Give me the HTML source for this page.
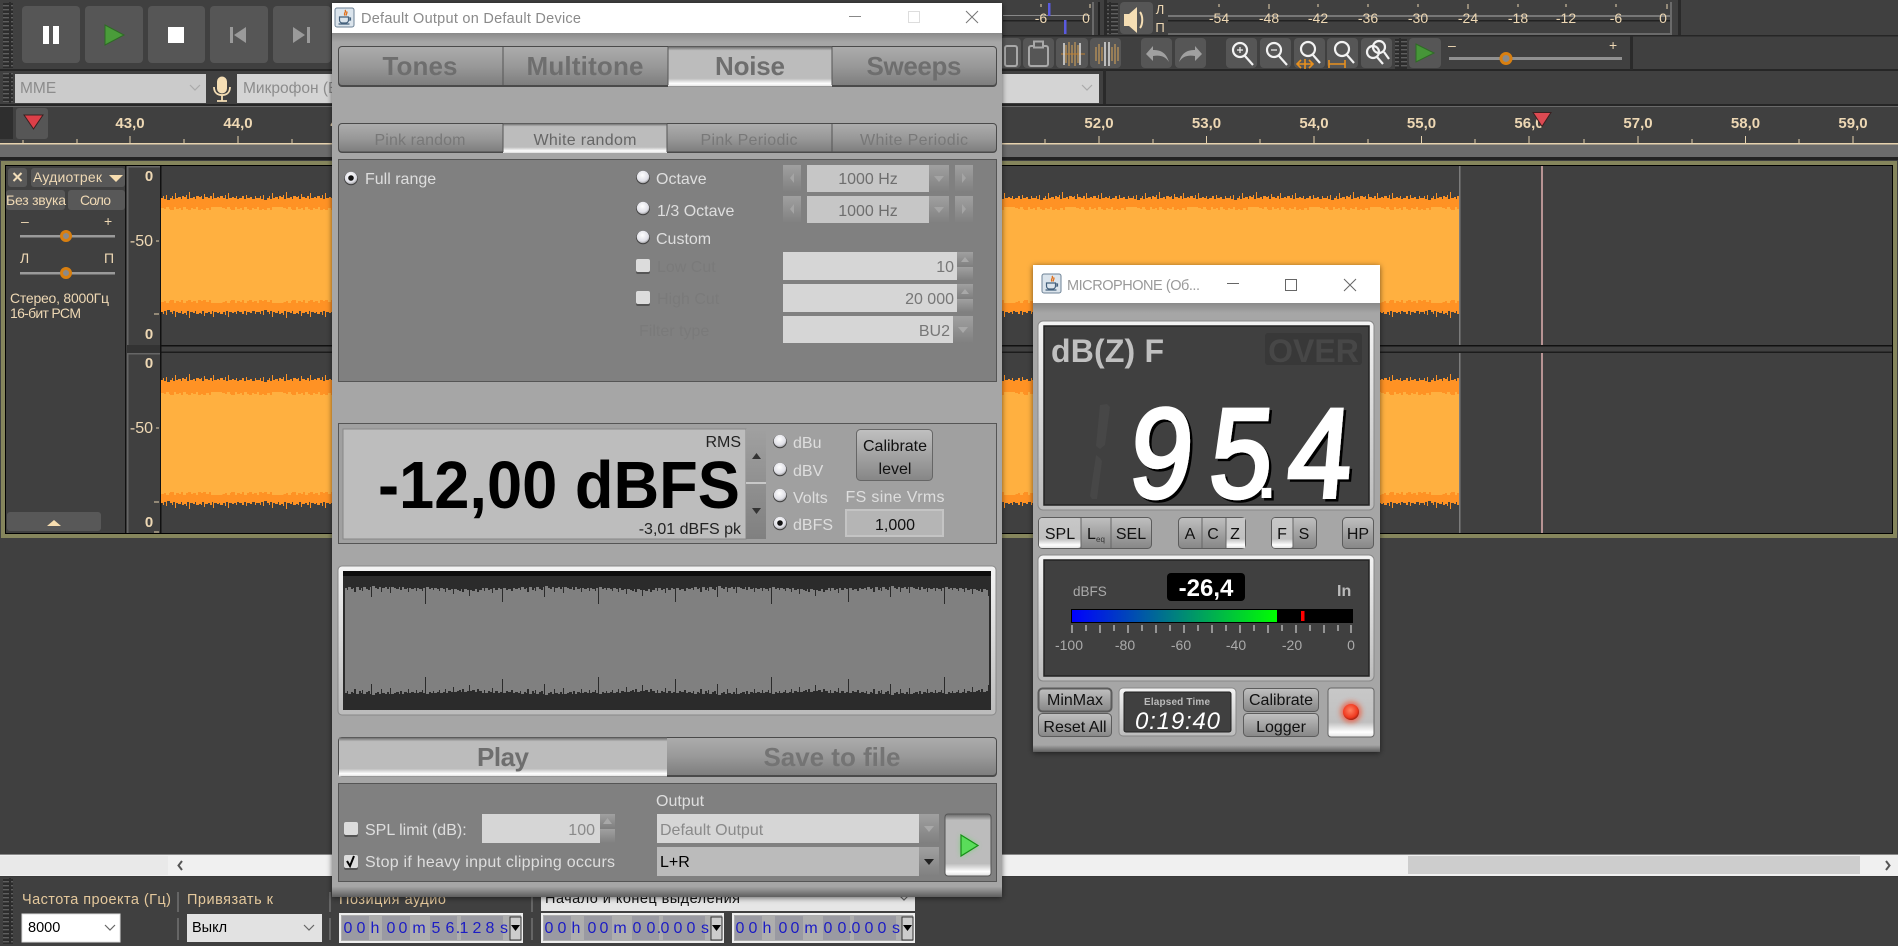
<!DOCTYPE html>
<html lang="ru"><head><meta charset="utf-8"><title>Audacity + REW generator</title>
<style>
html,body{margin:0;padding:0;background:#404040;width:1898px;height:946px;overflow:hidden}
svg{display:block}
text{font-family:"Liberation Sans","Noto Sans CJK SC",sans-serif;white-space:pre}
.b{font-weight:bold}.c{text-anchor:middle}.r{text-anchor:end}
.cr{fill:#eed8b4}.lt{fill:#dedede;font-size:16px}.dim{fill:#787878;font-size:16px}
.tab{font-weight:bold;font-size:26px;fill:#6e6e6e;text-anchor:middle}
.st{fill:#e4c89c;font-size:14.5px}
.rl{fill:#eed8b4;font-weight:bold;font-size:15px;text-anchor:middle}
.ml{fill:#eed8b4;font-size:14px;text-anchor:middle}
.bk{fill:#111;font-size:16px;text-anchor:middle}
.tm{fill:#1c1cc4;font-size:16px;text-anchor:middle}
</style></head><body>
<svg width="1898" height="946" viewBox="0 0 1898 946" xmlns="http://www.w3.org/2000/svg">
<defs>
<linearGradient id="tb" x1="0" y1="0" x2="0" y2="1"><stop offset="0" stop-color="#acacac"/><stop offset=".5" stop-color="#999"/><stop offset="1" stop-color="#7e7e7e"/></linearGradient>
<linearGradient id="ts" x1="0" y1="0" x2="0" y2="1"><stop offset="0" stop-color="#666"/><stop offset=".1" stop-color="#bcbcbc"/><stop offset=".8" stop-color="#bcbcbc"/><stop offset=".93" stop-color="#fff"/><stop offset="1" stop-color="#ddd"/></linearGradient>
<linearGradient id="sb" x1="0" y1="0" x2="0" y2="1"><stop offset="0" stop-color="#c0c0c0"/><stop offset="1" stop-color="#868686"/></linearGradient>
<linearGradient id="ss" x1="0" y1="0" x2="0" y2="1"><stop offset="0" stop-color="#c8c8c8"/><stop offset=".7" stop-color="#c0c0c0"/><stop offset=".9" stop-color="#fff"/><stop offset="1" stop-color="#e4e4e4"/></linearGradient>
<linearGradient id="bz" x1="0" y1="0" x2="0" y2="1"><stop offset="0" stop-color="#f4f4f4"/><stop offset="1" stop-color="#bbb"/></linearGradient>
<linearGradient id="sp" x1="0" y1="0" x2="0" y2="1"><stop offset="0" stop-color="#a0a0a0"/><stop offset="1" stop-color="#808080"/></linearGradient>
<linearGradient id="wb" x1="0" y1="0" x2="0" y2="1"><stop offset="0" stop-color="#a6a6a6"/><stop offset=".3" stop-color="#a6a6a6"/><stop offset="1" stop-color="#5e5e5e"/></linearGradient>
<linearGradient id="wt" x1="0" y1="0" x2="0" y2="1"><stop offset="0" stop-color="#8a8a8a"/><stop offset="1" stop-color="#a6a6a6"/></linearGradient>
<linearGradient id="vu"><stop offset="0" stop-color="#0000ff"/><stop offset="1" stop-color="#00ff00"/></linearGradient>
<radialGradient id="rad" cx=".45" cy=".35" r=".7"><stop offset="0" stop-color="#fff"/><stop offset=".7" stop-color="#dfdfe6"/><stop offset="1" stop-color="#888"/></radialGradient>
<radialGradient id="led" cx=".45" cy=".4" r=".6"><stop offset="0" stop-color="#ff8060"/><stop offset=".75" stop-color="#f03a20"/><stop offset="1" stop-color="#a02010"/></radialGradient>
<filter id="sh" x="-5%" y="-5%" width="110%" height="110%"><feDropShadow dx="0" dy="1" stdDeviation="3" flood-color="#000" flood-opacity=".55"/></filter>
<filter id="ds" x="-20%" y="-20%" width="140%" height="140%"><feDropShadow dx="2.5" dy="2.5" stdDeviation=".3" flood-color="#000" flood-opacity="1"/></filter>
<filter id="gl" x="-80%" y="-80%" width="260%" height="260%"><feGaussianBlur stdDeviation="3"/></filter>
<pattern id="grip" width="10" height="4" patternUnits="userSpaceOnUse"><rect width="10" height="4" fill="#2c2c2c"/><rect x="1" y="1" width="8" height="1.4" fill="#5e5e5e"/></pattern>
<pattern id="od" width="97" height="20" patternUnits="userSpaceOnUse"><path fill="#ff9224" d="M0 20V8H2V6H3V9H5V5H6V10H9V8H11V6H12V9H14V3H15V8H17V7H20V9H21V6H23V7H25V5H26V9H28V2H29V8H32V7H34V9H35V6H38V7H40V6H41V9H43V4H44V7H47V8H49V6H51V9H52V3H53V8H56V7H58V8H59V6H62V8H64V5H65V9H67V3H68V8H71V7H73V8H75V6H76V9H78V8H81V6H83V9H85V5H86V8H89V7H91V9H94V6H95V8H97V20Z"/></pattern>
<pattern id="ol" width="61" height="10" patternUnits="userSpaceOnUse"><path fill="#ffb040" d="M0 10V4H3V5H5V3H8V5H9V6H13V3H15V5H18V4H20V6H22V3H25V5H27V6H30V4H32V5H35V3H37V6H40V5H42V6H45V4H48V6H50V3H61V10Z"/></pattern>
<pattern id="dw" width="173" height="26" patternUnits="userSpaceOnUse"><path fill="#2b2b2b" d="M0 0V6H2V8H3V5H6V7H8V6H9V10H11V5H14V8H16V6H17V9H18V5H21V7H23V8H25V5H26V15H27V4H30V6H32V7H34V5H36V10H37V6H40V5H42V7H44V5H45V11H46V5H49V6H51V7H54V5H55V8H57V5H59V7H62V6H63V10H64V6H66V7H69V6H71V9H72V6H74V7H77V9H78V6H80V22H81V5H84V7H86V6H88V8H89V6H92V7H94V9H95V6H98V7H100V10H101V6H103V8H106V7H108V12H109V7H112V8H114V9H116V7H117V10H119V7H122V8H124V14H125V8H127V9H130V7H132V10H134V8H137V6H139V9H140V6H143V8H145V7H147V11H148V6H150V8H153V6H155V7H157V20H158V6H161V8H163V7H166V9H168V6H170V7H173V0Z"/></pattern>
<g id="rd"><circle r="6.8" cy=".5" fill="#3c3c3c"/><circle r="6.2" fill="url(#rad)"/></g>
<g id="rs"><circle r="6.8" cy=".5" fill="#3c3c3c"/><circle r="6.2" fill="url(#rad)"/><circle r="2.8" fill="#111"/></g>
<g id="java"><rect width="19" height="19" rx="2" fill="#dbe4ec" stroke="#6d8296"/><path d="M10 2c2 2-2 3 0 5.500M11.500 3.500c1.500 1.500-1 2.500 0 4" stroke="#e0701c" fill="none" stroke-width="1.300"/><path d="M4.500 9h9v3c0 2-1.500 3-3 3h-3c-1.500 0-3-1-3-3zM13.500 10h2v2h-2M3.500 16h11" stroke="#44607c" fill="none" stroke-width="1.200"/></g>
<g id="ck"><rect width="14" height="14" y="1" rx="2" fill="#555"/><rect width="14" height="13" rx="2" fill="#dcdcdc"/></g>
</defs>

<!-- background -->
<rect width="1898" height="946" fill="#404040"/>
<!-- toolbar rules -->
<rect y="69" width="1898" height="2" fill="#262626"/>
<rect x="1003" y="35" width="895" height="1.500" fill="#262626"/>
<rect y="104" width="1898" height="2" fill="#262626"/>
<rect y="106" width="1898" height="1" fill="#6a6a6a"/>
<rect x="1104" y="0" width="3" height="35" fill="#2a2a2a"/>
<rect x="1092" y="2" width="2" height="33" fill="#6a6a6a"/>
<rect x="1098" y="2" width="2" height="33" fill="#222"/>
<rect x="1670" y="2" width="2" height="33" fill="#6a6a6a"/>
<rect x="1678" y="0" width="3" height="35" fill="#2a2a2a"/>
<rect x="1630" y="36" width="3" height="34" fill="#2a2a2a"/>
<rect x="1103" y="70" width="3" height="34" fill="#2a2a2a"/>
<!-- grips -->
<rect x="3" y="2" width="10" height="66" fill="url(#grip)"/>
<rect x="3" y="73" width="10" height="30" fill="url(#grip)"/>
<rect x="0" y="107" width="13" height="32" fill="#2e2e2e"/>
<rect x="1107" y="2" width="11" height="32" fill="url(#grip)"/>
<rect x="1395" y="38" width="12" height="31" fill="url(#grip)"/>
<rect x="3" y="878" width="10" height="66" fill="url(#grip)"/>

<!-- transport -->
<g fill="#565656">
<rect x="22" y="6" width="58" height="57" rx="4"/><rect x="85" y="6" width="58" height="57" rx="4"/><rect x="148" y="6" width="57" height="57" rx="4"/><rect x="210" y="6" width="58" height="57" rx="4"/><rect x="273" y="6" width="58" height="57" rx="4"/>
<rect x="990" y="38" width="31" height="30" rx="4"/><rect x="1023" y="38" width="31" height="30" rx="4"/><rect x="1056" y="38" width="32" height="30" rx="4"/><rect x="1090" y="38" width="31" height="30" rx="4"/>
<rect x="1141" y="38" width="31" height="30" rx="4"/><rect x="1175" y="38" width="31" height="30" rx="4"/>
<rect x="1226" y="38" width="31" height="30" rx="4"/><rect x="1260" y="38" width="31" height="30" rx="4"/><rect x="1294" y="38" width="31" height="30" rx="4"/><rect x="1327" y="38" width="31" height="30" rx="4"/><rect x="1361" y="38" width="31" height="30" rx="4"/>
<rect x="1409" y="38" width="32" height="30" rx="4"/><rect x="1120" y="2" width="33" height="32" rx="4"/>
<rect x="16" y="108" width="32" height="31" rx="3"/>
</g>
<rect x="43" y="26" width="6" height="18" fill="#fff"/><rect x="53" y="26" width="6" height="18" fill="#fff"/>
<path d="M105 25l19 10-19 10z" fill="#4a9c3a" stroke="#2f6a26"/>
<rect x="168" y="27" width="16" height="16" fill="#fff"/>
<path d="M230 27h3v16h-3zM246 27v16l-12-8z" fill="#9a9a9a"/>
<path d="M307 27h3v16h-3zM293 27v16l12-8z" fill="#9a9a9a"/>
<path d="M1416 44l18 9-18 9z" fill="#469638" stroke="#2f6a26"/>

<!-- device row -->
<rect x="15" y="74" width="191" height="29" fill="#cbcbcb"/>
<text x="20" y="93" font-size="15.500" fill="#8c8c8c">MME</text>
<path d="M190 85l5 5 5-5" fill="none" stroke="#aaa" stroke-width="1.200"/>
<g fill="none" stroke="#f5deb4"><rect x="217.500" y="77" width="9" height="16" rx="4.500" fill="#f5deb4"/><path d="M214 87c0 6 4 8 8 8s8-2 8-8M222 95v6M217 101h10" stroke-width="1.800"/></g>
<rect x="237" y="74" width="862" height="29" fill="#d4d4d4"/>
<text x="243" y="93" font-size="15.500" fill="#8c8c8c">Микрофон (В</text>
<path d="M1082 85l5 5 5-5" fill="none" stroke="#aaa" stroke-width="1.200"/>

<!-- edit toolbar icons -->
<g fill="none" stroke="#a8a8a8" stroke-width="2"><rect x="1005" y="46" width="12" height="20" rx="2"/><rect x="1029" y="46" width="19" height="20" rx="2"/><rect x="1034" y="41.500" width="9" height="6" fill="#565656"/></g>
<g stroke="#a88858" stroke-width="1.600"><path d="M1066 45v18M1069 42v24M1072 45v18M1075 42v24M1078 45v18"/><path d="M1061 54h24" stroke="#c08030" stroke-width="1"/><path d="M1064 43v22M1080 43v22" stroke="#ddd" stroke-width="1.500"/></g>
<g stroke="#a88858" stroke-width="1.600"><path d="M1096 47v14M1099 44v20M1102 47v14M1112 47v14M1115 44v20M1118 47v14"/><path d="M1105 42v24M1109 42v24" stroke="#ddd" stroke-width="1.500"/></g>
<path d="M1146 54l7-8v4c7 0 13 2 16 12-4-6-9-7-16-6v5z" fill="#a0a0a0"/>
<path d="M1202 54l-7-8v4c-7 0-13 2-16 12 4-6 9-7 16-6v5z" fill="#a0a0a0"/>
<g fill="none" stroke="#f2f2f2" stroke-width="2.200">
<circle cx="1240" cy="50" r="7"/><path d="M1245 56l8 9"/><path d="M1237 50h6M1240 47v6" stroke-width="1.200"/>
<circle cx="1274" cy="50" r="7"/><path d="M1279 56l8 9"/><path d="M1271 50h6" stroke-width="1.200"/>
<circle cx="1308" cy="49" r="7"/><path d="M1313 55l7 8"/>
<circle cx="1342" cy="49" r="7"/><path d="M1347 55l7 8"/>
<circle cx="1373" cy="52" r="6"/><circle cx="1379" cy="47" r="6"/><path d="M1377 57l6 7M1384 52l5 7"/></g>
<g fill="none" stroke="#e8901e" stroke-width="1.600"><path d="M1297 64h16M1301 60l-4 4 4 4M1309 60l4 4-4 4M1305 59v10"/><path d="M1329 64h16M1329 60v8M1345 60v8"/></g>
<!-- play-speed slider -->
<text x="1448" y="50" font-size="14" class="cr">–</text><text x="1609" y="50" font-size="14" class="cr">+</text>
<rect x="1449" y="57" width="173" height="3" fill="#909090"/>
<circle cx="1506" cy="58.500" r="5" fill="#8a8a8a" stroke="#d87f10" stroke-width="3"/>

<!-- meter top row -->
<path d="M1124 14h5l8-7v26l-8-7h-5z" fill="#f5deb4"/><path d="M1140 12c3 4 3 12 0 16" fill="none" stroke="#f5deb4" stroke-width="2"/>
<text x="1160" y="14" font-size="13" class="cr c">Л</text><text x="1160" y="32" font-size="13" class="cr c">П</text>
<rect x="1003" y="15" width="87" height="1" fill="#888"/><rect x="1168" y="15" width="502" height="2" fill="#777"/><rect x="1003" y="20" width="87" height="1.500" fill="#222"/><rect x="1168" y="20" width="502" height="1.500" fill="#222"/>
<rect x="1168" y="33" width="502" height="2" fill="#6a6a6a"/>
<g class="ml"><text class="ml" x="1041" y="23">-6</text><text class="ml" x="1086" y="23">0</text><text class="ml" x="1219" y="23">-54</text><text class="ml" x="1269" y="23">-48</text><text class="ml" x="1318" y="23">-42</text><text class="ml" x="1368" y="23">-36</text><text class="ml" x="1418" y="23">-30</text><text class="ml" x="1468" y="23">-24</text><text class="ml" x="1518" y="23">-18</text><text class="ml" x="1566" y="23">-12</text><text class="ml" x="1616" y="23">-6</text><text class="ml" x="1663" y="23">0</text></g>
<path d="M1041 4v3M1090 4v4M1219 4v3M1269 4v5M1318 4v3M1368 4v3M1418 4v3M1468 4v5M1518 4v3M1566 4v3M1616 4v3M1667 4v5" stroke="#e8d4b0"/>
<rect x="1048" y="3" width="2.500" height="13" fill="#5a5ae0"/><rect x="1064" y="20" width="2.500" height="14" fill="#5a5ae0"/>

<!-- ruler -->
<rect x="0" y="143" width="1898" height="1.500" fill="#e6d2ae"/>
<rect x="0" y="144.500" width="1898" height="13" fill="#6b6b6b"/>
<rect x="0" y="157" width="1898" height="3" fill="#222"/>
<path d="M23 140v3M77 139v4M184 139v4M292 139v4M1045 139v4M1153 139v4M1260 139v4M1368 139v4M1475 139v4M1584 139v4M1692 139v4M1799 139v4M130 136v7M238 136v7M1099 136v7M1206.500 136v7M1314 136v7M1421.500 136v7M1529 136v7M1638 136v7M1745.500 136v7M1853 136v7" stroke="#e6d2ae"/>
<text class="rl" x="130" y="128">43,0</text><text class="rl" x="238" y="128">44,0</text><text class="rl" x="345" y="128">45,0</text><text class="rl" x="1099" y="128">52,0</text><text class="rl" x="1206.500" y="128">53,0</text><text class="rl" x="1314" y="128">54,0</text><text class="rl" x="1421.500" y="128">55,0</text><text class="rl" x="1529" y="128">56,0</text><text class="rl" x="1638" y="128">57,0</text><text class="rl" x="1745.500" y="128">58,0</text><text class="rl" x="1853" y="128">59,0</text>
<path d="M24 115h19l-9.500 14z" fill="#dd3f48" stroke="#3a2020"/>
<path d="M1533 112.500h18l-9 14z" fill="#dd4a52" stroke="#3a2020"/>

<!-- track frame -->
<rect x="1" y="161" width="1896" height="377" fill="#85855c"/>
<rect x="5" y="165" width="1888" height="369" fill="#000"/>
<rect x="6" y="166" width="1886" height="367" fill="#404040"/>
<rect x="126" y="345" width="1766" height="1.500" fill="#111"/>
<rect x="161" y="351.500" width="1731" height="1.500" fill="#1c1c1c"/>
<rect x="125" y="166" width="1.500" height="367" fill="#111"/>
<rect x="126.500" y="166" width="2" height="367" fill="#666"/>
<rect x="128" y="166" width="33" height="1.500" fill="#666"/>
<rect x="128" y="353" width="33" height="1.500" fill="#666"/>
<rect x="127" y="345" width="34" height="8" fill="#333"/>
<rect x="160" y="166" width="1.500" height="367" fill="#111"/>

<!-- waveform track 1 -->
<g>
<rect x="161" y="206" width="1298" height="98" fill="#ff9224"/>
<g transform="translate(161,190)"><rect width="1298" height="20" fill="url(#od)"/></g>
<g transform="translate(161,320) scale(1,-1)"><rect width="1298" height="20" fill="url(#od)"/></g>
<rect x="161" y="212" width="1298" height="86" fill="#ffb040"/>
<g transform="translate(161,204)"><rect width="1298" height="10" fill="url(#ol)"/></g>
<g transform="translate(161,306) scale(1,-1)"><rect width="1298" height="10" fill="url(#ol)"/></g>
<!-- waveform track 2 -->
<rect x="161" y="390" width="1298" height="106" fill="#ff9224"/>
<g transform="translate(161,372)"><rect width="1298" height="20" fill="url(#od)"/></g>
<g transform="translate(161,511) scale(1,-1)"><rect width="1298" height="20" fill="url(#od)"/></g>
<rect x="161" y="397" width="1298" height="93" fill="#ffb040"/>
<g transform="translate(161,389)"><rect width="1298" height="10" fill="url(#ol)"/></g>
<g transform="translate(161,498) scale(1,-1)"><rect width="1298" height="10" fill="url(#ol)"/></g>
</g>
<rect x="1459" y="166" width="1.500" height="179" fill="#7c7c7c"/><rect x="1459" y="353" width="1.500" height="180" fill="#7c7c7c"/>
<rect x="1541" y="166" width="2" height="179" fill="#b89494"/><rect x="1541" y="353" width="2" height="180" fill="#b89494"/>

<!-- track control panel -->
<g fill="#585858"><rect x="8" y="168" width="19" height="19" rx="3"/><rect x="31" y="168" width="94" height="19" rx="3"/><rect x="6" y="190" width="59" height="20" rx="3"/><rect x="68" y="190" width="57" height="20" rx="3"/><rect x="7" y="512" width="94" height="19" rx="3"/></g>
<path d="M13.500 173l8 8M21.500 173l-8 8" stroke="#f0dcb8" stroke-width="2"/>
<text x="33" y="182" font-size="14" class="cr" textLength="69">Аудиотрек</text>
<path d="M109 175h14l-7 7z" fill="#f8deb0"/>
<text x="6" y="205" font-size="14" class="cr" textLength="60">Без звука</text>
<text x="80" y="205" font-size="14" class="cr" textLength="31">Соло</text>
<path d="M47 526l7-6 7 6z" fill="#f8deb0"/>
<text x="21" y="226" font-size="14" class="cr">–</text><text x="104" y="226" font-size="14" class="cr">+</text>
<rect x="20" y="235" width="95" height="2.500" fill="#9a9a9a"/><circle cx="66" cy="236" r="4.500" fill="#8a8a8a" stroke="#d87f10" stroke-width="3"/>
<text x="20" y="263" font-size="14" class="cr">Л</text><text x="104" y="263" font-size="14" class="cr">П</text>
<rect x="20" y="272" width="95" height="2.500" fill="#9a9a9a"/><circle cx="66" cy="273" r="4.500" fill="#8a8a8a" stroke="#d87f10" stroke-width="3"/>
<text x="10" y="303" font-size="14" class="cr" textLength="99">Стерео, 8000Гц</text>
<text x="10" y="318" font-size="14" class="cr" textLength="71">16-бит PCM</text>
<!-- vertical scale -->
<g font-weight="bold"><text class="rl" x="149" y="181">0</text><text class="rl" x="149" y="339">0</text><text class="rl" x="149" y="368">0</text><text class="rl" x="149" y="527">0</text></g>
<text class="cr r" x="153" y="246" font-size="16">-50</text>
<text class="cr r" x="153" y="433" font-size="16">-50</text>
<path d="M156 241h3M154 314h5M156 428h3M154 502h5M154 532h5" stroke="#e6d2ae"/>

<!-- scrollbar -->
<rect y="854" width="1898" height="23" fill="#3a3a3a"/>
<rect y="854" width="1898" height="1" fill="#888"/>
<rect y="855" width="1898" height="21" fill="#f0f0f0"/>
<rect y="856" width="168" height="19" fill="#e9e9e9"/>
<rect x="1408" y="856" width="452" height="18" fill="#cdcdcd"/>
<path d="M182 861l-3.500 4.500 3.500 4.500M1886 861l3.500 4.500-3.500 4.500" fill="none" stroke="#555" stroke-width="2"/>

<!-- bottom status bar -->
<text class="st" x="22" y="904" textLength="149">Частота проекта (Гц)</text>
<text class="st" x="187" y="904" textLength="86">Привязать к</text>
<text class="st" x="339" y="904" textLength="107">Позиция аудио</text>
<path d="M178 892v20M178 918v22M330 892v20M330 918v22M532 892v20M532 918v22" stroke="#8a8a8a"/>
<rect x="22" y="914" width="98" height="28" fill="#fff" stroke="#ddd"/>
<text x="28" y="932" font-size="14.500" fill="#000">8000</text>
<path d="M105 925l5 5 5-5" fill="none" stroke="#666" stroke-width="1.200"/>
<rect x="187" y="914" width="135" height="28" fill="#e2e2e2"/>
<text x="192" y="932" font-size="14.500" fill="#000">Выкл</text>
<path d="M304 925l5 5 5-5" fill="none" stroke="#666" stroke-width="1.200"/>
<rect x="541" y="884" width="374" height="27" fill="#e6e6e6"/>
<text x="545" y="903" font-size="14.500" fill="#111" textLength="195">Начало и конец выделения</text>
<path d="M899 895l5 5 5-5" fill="none" stroke="#666" stroke-width="1.200"/>
<!-- time controls -->
<g><rect x="339" y="913" width="184" height="30" fill="#eee"/><rect x="341" y="915" width="180" height="26" fill="#aeaeae"/>
<path d="M342 916h27v24h-27zM382 916h28v24h-28zM430 916h27v24h-27zM461 916h42v24h-42z" fill="#9a9aa2"/>
<text class="tm" x="348 361 375 391 403 419 436 450 458 464 477 490 504" y="933">00h00m56.128s</text>
<rect x="510" y="917" width="11" height="23" fill="#ccc" stroke="#333"/><path d="M511 925h9l-4.500 6z" fill="#000"/></g>
<g><rect x="541" y="913" width="183" height="30" fill="#eee"/><rect x="543" y="915" width="179" height="26" fill="#aeaeae"/>
<path d="M544 916h27v24h-27zM584 916h28v24h-28zM632 916h27v24h-27zM663 916h42v24h-42z" fill="#9a9aa2"/>
<text class="tm" x="549 562 576 592 604 620 637 651 659 665 678 691 705" y="933">00h00m00.000s</text>
<rect x="711" y="917" width="11" height="23" fill="#ccc" stroke="#333"/><path d="M712 925h9l-4.500 6z" fill="#000"/></g>
<g><rect x="732" y="913" width="183" height="30" fill="#eee"/><rect x="734" y="915" width="179" height="26" fill="#aeaeae"/>
<path d="M735 916h27v24h-27zM775 916h28v24h-28zM823 916h27v24h-27zM854 916h42v24h-42z" fill="#9a9aa2"/>
<text class="tm" x="740 753 767 783 795 811 828 842 850 856 869 882 896" y="933">00h00m00.000s</text>
<rect x="902" y="917" width="11" height="23" fill="#ccc" stroke="#333"/><path d="M903 925h9l-4.500 6z" fill="#000"/></g>

<!-- ============ GENERATOR WINDOW ============ -->
<g filter="url(#sh)"><rect x="332" y="3" width="670" height="894" fill="#a6a6a6"/></g>
<rect x="332" y="3" width="670" height="30" fill="#fff"/>
<rect x="332" y="33" width="670" height="9" fill="url(#wt)"/>
<use href="#java" x="335" y="8"/>
<text x="361" y="23" font-size="14.500" fill="#8a8a8a" textLength="220">Default Output on Default Device</text>
<rect x="849" y="16" width="12" height="1" fill="#888"/>
<rect x="908.500" y="11.500" width="11" height="11" fill="none" stroke="#ddd"/>
<path d="M966 11l12 12M978 11l-12 12" stroke="#777" stroke-width="1"/>

<!-- main tabs -->
<rect x="338" y="46" width="659" height="41" rx="4" fill="#4a4a4a"/>
<rect x="339" y="47" width="657" height="38" rx="3" fill="url(#tb)"/>
<rect x="668" y="46.500" width="164" height="40" fill="url(#ts)"/>
<path d="M503 47v38M668 47v38M832 47v38" stroke="#555"/>
<text class="tab" x="420" y="75" textLength="75">Tones</text>
<text class="tab" x="585" y="75" textLength="117">Multitone</text>
<text class="tab" x="750" y="75" textLength="70">Noise</text>
<text class="tab" x="914" y="75" textLength="95">Sweeps</text>
<!-- sub tabs -->
<rect x="338" y="123" width="659" height="30" rx="4" fill="#4a4a4a"/>
<rect x="339" y="124" width="657" height="27.500" rx="3" fill="url(#tb)"/>
<rect x="503" y="123.500" width="164" height="29.500" fill="url(#ts)"/>
<path d="M503 124v28M667 124v28M832 124v28" stroke="#555"/>
<text class="dim c" x="420" y="145" textLength="91">Pink random</text>
<text class="c" x="585" y="145" font-size="16" fill="#666" textLength="103">White random</text>
<text class="dim c" x="749" y="145" textLength="97">Pink Periodic</text>
<text class="dim c" x="914" y="145" textLength="108">White Periodic</text>

<!-- noise panel -->
<rect x="338.500" y="159.500" width="658" height="222" fill="#808080" stroke="#555"/>
<use href="#rs" x="351" y="178"/><text class="lt" x="365" y="184">Full range</text>
<use href="#rd" x="643" y="177"/><text class="lt" x="656" y="184">Octave</text>
<use href="#rd" x="643" y="208"/><text class="lt" x="657" y="216">1/3 Octave</text>
<use href="#rd" x="643" y="237"/><text class="lt" x="656" y="244">Custom</text>
<!-- spinner rows -->
<g fill="url(#sp)"><rect x="783" y="165" width="18" height="27"/><rect x="929" y="165" width="20" height="27"/><rect x="955" y="165" width="18" height="27"/><rect x="783" y="196" width="18" height="27"/><rect x="929" y="196" width="20" height="27"/><rect x="955" y="196" width="18" height="27"/></g>
<rect x="807" y="165" width="122" height="27" fill="#c6c6c6"/><rect x="807" y="196" width="122" height="27" fill="#c6c6c6"/>
<text class="c" x="868" y="184" font-size="16" fill="#6e6e6e">1000 Hz</text><text class="c" x="868" y="216" font-size="16" fill="#6e6e6e">1000 Hz</text>
<path d="M794 173v10l-4-5zM794 204v10l-4-5zM962 173v10l4-5zM962 204v10l4-5zM934 176h10l-5 6zM934 207h10l-5 6z" fill="#a4a4a4"/>
<rect x="783" y="252" width="174" height="28" fill="#d6d6d6"/><rect x="783" y="284" width="174" height="28" fill="#d6d6d6"/><rect x="783" y="316" width="170" height="27" fill="#d6d6d6"/>
<g fill="url(#sp)"><rect x="957" y="252" width="16" height="14"/><rect x="957" y="267" width="16" height="13"/><rect x="957" y="284" width="16" height="14"/><rect x="957" y="299" width="16" height="13"/><rect x="953" y="316" width="20" height="27"/></g>
<path d="M961 262l4-5 4 5zM961 294l4-5 4 5zM958 327h10l-5 6z" fill="#a8a8a8"/>
<text class="r" x="954" y="272" font-size="16" fill="#777">10</text>
<text class="r" x="954" y="304" font-size="16" fill="#777">20 000</text>
<text class="r" x="950" y="336" font-size="16" fill="#777">BU2</text>
<use href="#ck" x="636" y="259"/><use href="#ck" x="636" y="291"/>
<text x="657" y="272" font-size="16" fill="#7a7a7a">Low Cut</text>
<text x="657" y="304" font-size="16" fill="#7a7a7a">High Cut</text>
<text x="639" y="336" font-size="16" fill="#7a7a7a">Filter type</text>

<!-- level panel -->
<rect x="338.500" y="423.500" width="658" height="120" fill="#a0a0a0" stroke="#555"/>
<rect x="343" y="429" width="403" height="110" fill="#bdbdbd" stroke="#888"/>
<rect x="746" y="429" width="20" height="110" fill="url(#sp)"/>
<rect x="746" y="482" width="20" height="2" fill="#c8c8c8"/>
<path d="M752 459h9l-4.500-6zM752 508h9l-4.500 6z" fill="#333"/>
<text class="r" x="741" y="447" font-size="16" fill="#222">RMS</text>
<text x="378" y="508" font-size="67" class="b" fill="#000" textLength="362" lengthAdjust="spacingAndGlyphs">-12,00 dBFS</text>
<text class="r" x="741" y="534" font-size="16" fill="#222">-3,01 dBFS pk</text>
<use href="#rd" x="780" y="441"/><text class="lt" x="793" y="448">dBu</text>
<use href="#rd" x="780" y="469"/><text class="lt" x="793" y="476">dBV</text>
<use href="#rd" x="780" y="495"/><text class="lt" x="793" y="503">Volts</text>
<use href="#rs" x="780" y="523"/><text class="lt" x="793" y="530">dBFS</text>
<rect x="856.500" y="429.500" width="76" height="51" rx="4" fill="url(#sb)" stroke="#666"/>
<text class="bk" x="895" y="451">Calibrate</text><text class="bk" x="895" y="474">level</text>
<text class="lt c" x="895" y="502" textLength="99">FS sine Vrms</text>
<rect x="846" y="510" width="97" height="26" fill="#b5b5b5" stroke="#c4c4c4" stroke-width="2"/>
<text class="bk" x="895" y="530">1,000</text>

<!-- waveform box -->
<rect x="338" y="566" width="658" height="149" rx="4" fill="url(#bz)" stroke="#888"/>
<rect x="343" y="571" width="648" height="139" fill="#2b2b2b"/>
<rect x="343" y="571" width="648" height="5" fill="#0c0c0c"/>
<rect x="345" y="582" width="644" height="116" fill="#808080"/>
<g transform="translate(345,582)"><rect width="644" height="26" fill="url(#dw)"/></g>
<g transform="translate(345,699) scale(1,-1)"><rect width="644" height="26" fill="url(#dw)"/></g>

<!-- play/save -->
<rect x="338" y="737" width="659" height="40" rx="4" fill="#4a4a4a"/>
<rect x="339" y="738" width="657" height="37" rx="3" fill="url(#tb)"/>
<rect x="339" y="737.500" width="328" height="39" fill="url(#ts)"/>
<text class="tab" x="503" y="766" textLength="52">Play</text>
<text class="tab" x="832" y="766" textLength="137" style="fill:#747474">Save to file</text>

<!-- output panel -->
<rect x="338.500" y="783.500" width="658" height="98" fill="#808080" stroke="#555"/>
<text class="lt" x="656" y="806">Output</text>
<use href="#ck" x="344" y="822"/><text class="lt" x="365" y="835">SPL limit (dB):</text>
<rect x="482" y="814" width="118" height="29" fill="#d6d6d6"/>
<text class="r" x="595" y="835" font-size="16" fill="#8a8a8a">100</text>
<g fill="url(#sp)"><rect x="600" y="814" width="15" height="14"/><rect x="600" y="829" width="15" height="14"/></g>
<path d="M603 824l4.500-6 4.500 6z" fill="#a8a8a8"/>
<use href="#ck" x="344" y="855"/><path d="M347 861l3 5 4-10" fill="none" stroke="#000" stroke-width="2"/>
<text class="lt" x="365" y="867" textLength="250">Stop if heavy input clipping occurs</text>
<rect x="657" y="814" width="262" height="29" fill="#d6d6d6"/>
<text x="660" y="835" font-size="16" fill="#8a8a8a">Default Output</text>
<rect x="919" y="814" width="20" height="29" fill="url(#sp)"/><path d="M924 826h10l-5 6z" fill="#a8a8a8"/>
<rect x="657" y="847" width="262" height="29" fill="#bbb"/>
<text x="660" y="867" font-size="16" fill="#000">L+R</text>
<rect x="919" y="847" width="20" height="29" fill="url(#sp)"/><path d="M924 859h10l-5 6z" fill="#222"/>
<rect x="945" y="814" width="46" height="62" rx="3" fill="url(#ts)" stroke="#555"/>
<path d="M961 835l17 10.500-17 10.500z" fill="#4fe04f" filter="url(#gl)" opacity=".6"/>
<path d="M961 835l17 10.500-17 10.500z" fill="#5adc5a" stroke="#169016" stroke-width="1.200"/>
<rect x="332" y="882" width="670" height="15" fill="url(#wb)"/>

<!-- ============ METER WINDOW ============ -->
<g filter="url(#sh)"><rect x="1033" y="265" width="347" height="487" fill="#a6a6a6"/></g>
<rect x="1033" y="265" width="347" height="38" fill="#fff"/>
<rect x="1033" y="303" width="347" height="10" fill="url(#wt)"/>
<use href="#java" x="1042" y="274"/>
<text x="1067" y="290" font-size="14.500" fill="#9a9a9a" textLength="133">MICROPHONE (Об...</text>
<rect x="1227" y="283" width="12" height="1" fill="#666"/>
<rect x="1285.500" y="279.500" width="11" height="11" fill="none" stroke="#666"/>
<path d="M1344 279l12 12M1356 279l-12 12" stroke="#666"/>

<!-- big display -->
<rect x="1038" y="321" width="336" height="189" rx="5" fill="url(#bz)" stroke="#888"/>
<rect x="1044" y="326" width="325" height="179" fill="#404040" stroke="#222" stroke-width="1.500"/>
<text class="b" x="1051" y="362" font-size="32" fill="#c0c0c0" textLength="113">dB(Z) F</text>
<rect x="1265" y="333" width="97" height="32" rx="3" fill="#383838"/>
<text class="b c" x="1313.500" y="362" font-size="32" fill="#474747">OVER</text>
<!-- unlit segments -->
<path d="M1100 405l7-1 3 3-5 38-5 4-4-3zM1096 455l4 3 2 3-5 38-5 0-2-3z" fill="#474747"/>
<g fill="#fff" stroke="#fff" stroke-width="4" filter="url(#ds)" font-size="127">
<text transform="translate(1127,497) skewX(-5) scale(.88,1)">9</text>
<text transform="translate(1207,497) skewX(-5) scale(.88,1)">5</text>
<text transform="translate(1285,497) skewX(-5) scale(.9,1)">4</text>
</g>
<text x="1257" y="498" font-size="68" font-weight="bold" fill="#fff" filter="url(#ds)">.</text>

<!-- mode buttons -->
<g stroke="#5c5c5c">
<rect x="1038.500" y="517.500" width="113" height="31" rx="4" fill="url(#sb)"/>
<rect x="1178.500" y="517.500" width="67" height="31" rx="4" fill="url(#sb)"/>
<rect x="1271.500" y="517.500" width="45" height="31" rx="4" fill="url(#sb)"/>
<rect x="1342.500" y="517.500" width="31" height="31" rx="4" fill="url(#sb)"/>
</g>
<rect x="1039" y="518" width="42" height="30" rx="3" fill="url(#ss)"/>
<rect x="1226" y="518" width="19" height="30" fill="url(#ss)"/>
<rect x="1272" y="518" width="21" height="30" rx="3" fill="url(#ss)"/>
<path d="M1081 518v30M1111 518v30M1202 518v30M1226 518v30M1293 518v30" stroke="#666"/>
<text class="bk" x="1060" y="539">SPL</text>
<text x="1087" y="539" font-size="16" fill="#111">L</text><text x="1096" y="542" font-size="8" fill="#333">eq</text>
<text class="bk" x="1131" y="539">SEL</text>
<text class="bk" x="1190" y="539">A</text><text class="bk" x="1213" y="539">C</text><text class="bk" x="1235" y="539">Z</text>
<text class="bk" x="1282" y="539">F</text><text class="bk" x="1304" y="539">S</text>
<text class="bk" x="1358" y="539">HP</text>

<!-- level meter -->
<rect x="1038" y="555" width="336" height="126" rx="5" fill="url(#bz)" stroke="#888"/>
<rect x="1044" y="560" width="325" height="116" fill="#404040" stroke="#222" stroke-width="1.500"/>
<text x="1073" y="596" font-size="13.500" fill="#aaa">dBFS</text>
<rect x="1167" y="573" width="78" height="28" rx="4" fill="#000"/>
<text class="b c" x="1206" y="596" font-size="24" fill="#fff">-26,4</text>
<text class="b" x="1337" y="596" font-size="16" fill="#bbb">In</text>
<rect x="1071" y="609" width="282" height="14" fill="#000"/>
<rect x="1072" y="610" width="205" height="12" fill="url(#vu)"/>
<rect x="1301" y="611" width="3.500" height="10" fill="#f00"/>
<path d="M1072 625v8M1086 625v6M1100 625v8M1114 625v6M1128 625v8M1142 625v6M1156 625v8M1170 625v6M1184 625v8M1198 625v6M1212 625v8M1226 625v6M1240 625v8M1254 625v6M1268 625v8M1282 625v6M1296 625v8M1310 625v6M1324 625v8M1338 625v6M1351 625v8" stroke="#e8e8e8"/>
<g font-size="14" fill="#aaa" text-anchor="middle"><text x="1069" y="650">-100</text><text x="1125" y="650">-80</text><text x="1181" y="650">-60</text><text x="1236" y="650">-40</text><text x="1292" y="650">-20</text><text x="1351" y="650">0</text></g>

<!-- bottom buttons -->
<g stroke="#5c5c5c">
<rect x="1038.500" y="688.500" width="73" height="23" rx="4" fill="url(#sb)" stroke-width="2"/>
<rect x="1038.500" y="713.500" width="73" height="23" rx="4" fill="url(#sb)"/>
<rect x="1243.500" y="688.500" width="75" height="23" rx="4" fill="url(#sb)"/>
<rect x="1243.500" y="713.500" width="75" height="23" rx="4" fill="url(#sb)"/>
</g>
<text class="bk" x="1075" y="705">MinMax</text><text class="bk" x="1075" y="732">Reset All</text>
<text class="bk" x="1281" y="705">Calibrate</text><text class="bk" x="1281" y="732">Logger</text>
<rect x="1119" y="688" width="117" height="48" rx="4" fill="url(#bz)" stroke="#888"/>
<rect x="1124" y="692" width="107" height="40" rx="2" fill="#404040" stroke="#222"/>
<text class="b c" x="1177" y="705" font-size="10" fill="#bbb" textLength="66">Elapsed Time</text>
<text x="1135" y="729" font-size="24" font-style="italic" fill="#fff" textLength="85">0:19:40</text>
<rect x="1328" y="688" width="46" height="49" rx="3" fill="url(#ss)" stroke="#666"/>
<circle cx="1351" cy="712" r="10" fill="#ff3010" filter="url(#gl)" opacity=".7"/>
<circle cx="1351" cy="712" r="8" fill="url(#led)"/>
<rect x="1033" y="742" width="347" height="10" fill="url(#wb)"/>
</svg>
</body></html>
